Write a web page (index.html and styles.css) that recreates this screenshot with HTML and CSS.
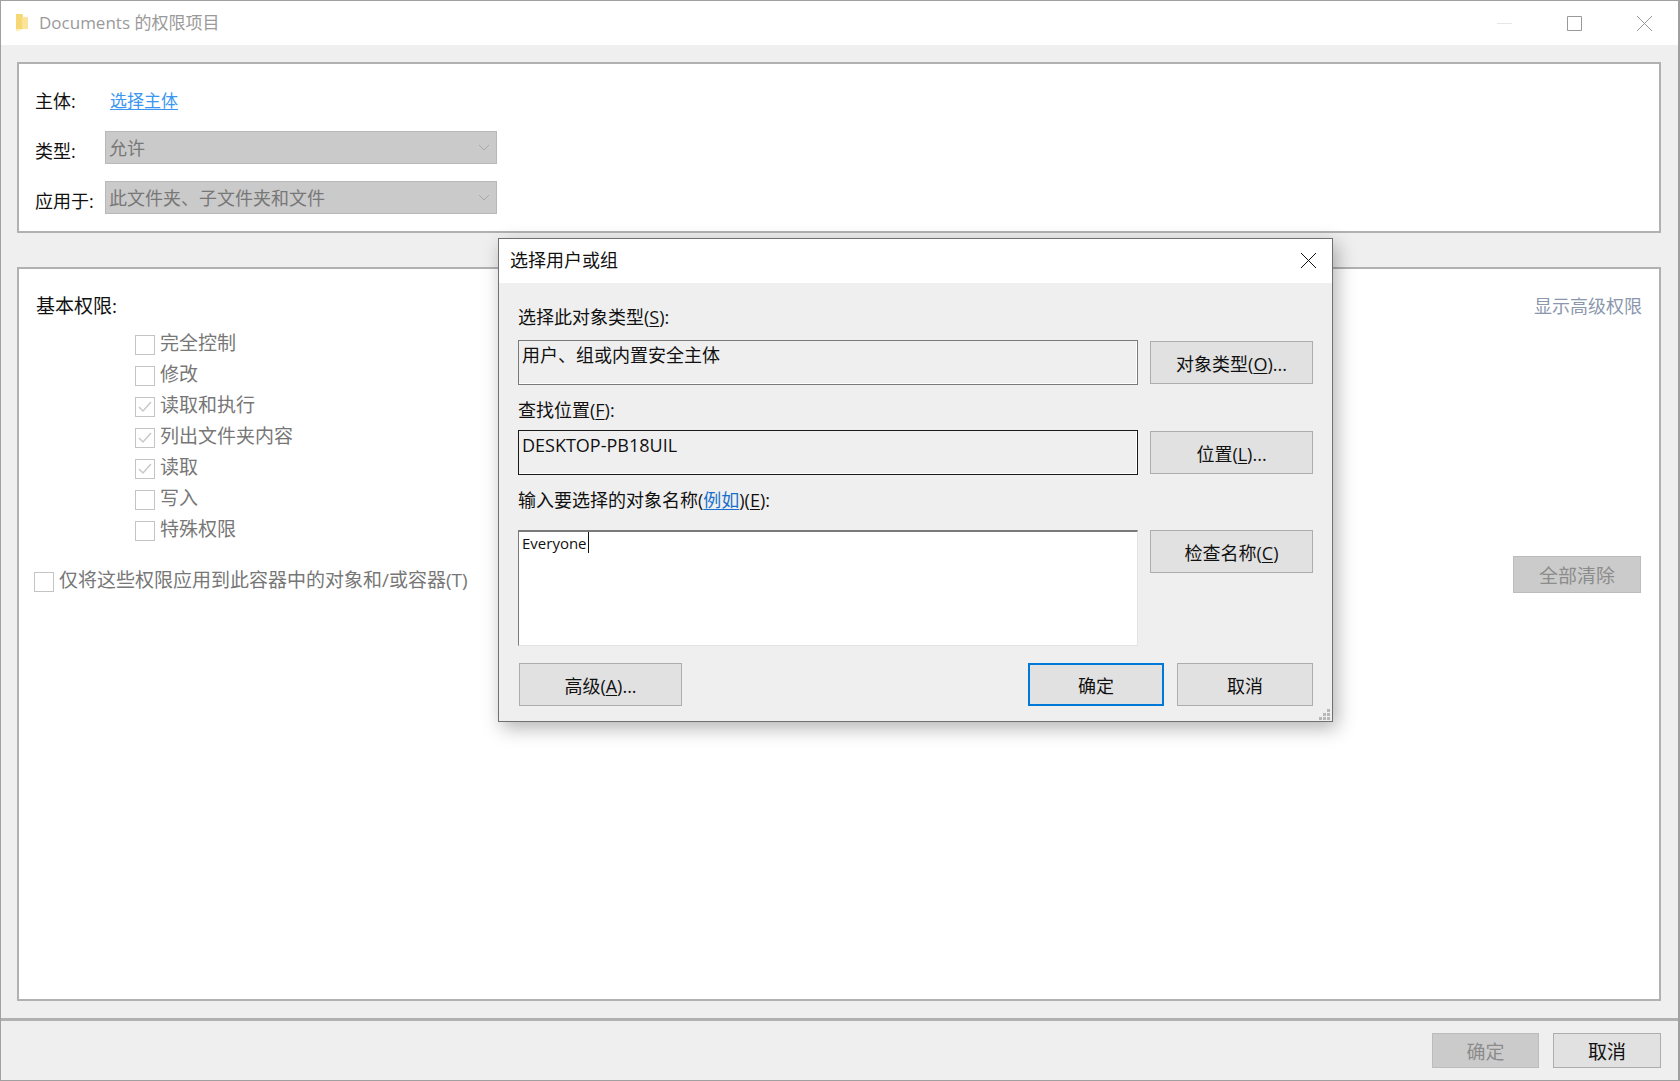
FILE: index.html
```html
<!DOCTYPE html>
<html lang="zh-CN">
<head>
<meta charset="utf-8">
<title>Documents 的权限项目</title>
<link rel="stylesheet" href="styles.css">
</head>
<body>
<div class="window">
  <header class="titlebar">
    <svg class="folder" width="14" height="20" viewBox="0 0 14 20"><path d="M1 1h6l1 1v14l-6 2-1-1z" fill="#f7d774"/><path d="M7 4h6v12H7z" fill="#fbe39a"/><path d="M1 16l1 3 6-3z" fill="#fff1c4"/></svg>
    <span class="window-title">Documents 的权限项目</span>
    <div class="window-controls">
      <svg width="15" height="15" viewBox="0 0 15 15"><path d="M0 7.5h15" stroke="#e6e6e6" fill="none"/></svg>
      <svg width="15" height="15" viewBox="0 0 15 15"><path d="M.5.5h14v14H.5z" stroke="#999" fill="none"/></svg>
      <svg width="15" height="15" viewBox="0 0 15 15"><path d="M0 0l15 15M15 0L0 15" stroke="#999" fill="none"/></svg>
    </div>
  </header>
  <main class="content">
    <section class="panel panel-top">
      <div class="form-grid">
        <span class="form-label form-label-plain">主体:</span>
        <a class="principal-link" href="#">选择主体</a>
        <span class="form-label">类型:</span>
        <div class="select"><span>允许</span><svg width="10" height="6" viewBox="0 0 10 6"><path d="M0 0l5 5 5-5" stroke="#a8a8a8" fill="none"/></svg></div>
        <span class="form-label">应用于:</span>
        <div class="select"><span>此文件夹、子文件夹和文件</span><svg width="10" height="6" viewBox="0 0 10 6"><path d="M0 0l5 5 5-5" stroke="#a8a8a8" fill="none"/></svg></div>
      </div>
    </section>
    <section class="panel panel-main">
      <div class="perm-head">
        <span>基本权限:</span>
        <span class="show-advanced">显示高级权限</span>
      </div>
      <ul class="perm-list">
        <li class="perm"><span class="checkbox"></span><span>完全控制</span></li>
        <li class="perm"><span class="checkbox"></span><span>修改</span></li>
        <li class="perm"><span class="checkbox"><svg width="16" height="16" viewBox="0 0 16 16"><path d="M2 8l4 4 8-9" stroke="#c8c8c8" stroke-width="1.5" fill="none"/></svg></span><span>读取和执行</span></li>
        <li class="perm"><span class="checkbox"><svg width="16" height="16" viewBox="0 0 16 16"><path d="M2 8l4 4 8-9" stroke="#c8c8c8" stroke-width="1.5" fill="none"/></svg></span><span>列出文件夹内容</span></li>
        <li class="perm"><span class="checkbox"><svg width="16" height="16" viewBox="0 0 16 16"><path d="M2 8l4 4 8-9" stroke="#c8c8c8" stroke-width="1.5" fill="none"/></svg></span><span>读取</span></li>
        <li class="perm"><span class="checkbox"></span><span>写入</span></li>
        <li class="perm"><span class="checkbox"></span><span>特殊权限</span></li>
      </ul>
      <div class="perm-foot">
        <div class="perm perm-apply"><span class="checkbox"></span><span>仅将这些权限应用到此容器中的对象和/或容器(T)</span></div>
        <button class="btn-disabled btn-clear" type="button">全部清除</button>
      </div>
    </section>
  </main>
  <footer class="footer">
    <button class="btn-disabled btn-foot" type="button">确定</button>
    <button class="btn btn-foot btn-foot-cancel" type="button">取消</button>
  </footer>
</div>

<div class="dialog">
  <header class="dialog-title">
    <span>选择用户或组</span>
    <svg width="15" height="15" viewBox="0 0 15 15"><path d="M0 0l15 15M15 0L0 15" stroke="#111" fill="none"/></svg>
  </header>
  <div class="dialog-body">
    <div class="dialog-label dl-1">选择此对象类型(<u>S</u>):</div>
    <div class="field field-1">用户、组或内置安全主体</div>
    <button class="btn btn-side" type="button">对象类型(<u>O</u>)...</button>
    <div class="dialog-label dl-2">查找位置(<u>F</u>):</div>
    <div class="field field-2">DESKTOP-PB18UIL</div>
    <button class="btn btn-side" type="button">位置(<u>L</u>)...</button>
    <div class="dialog-label dl-3">输入要选择的对象名称(<a class="sample-link" href="#">例如</a>)(<u>E</u>):</div>
    <div class="names"><span class="names-text">Everyone</span><span class="caret"></span></div>
    <button class="btn btn-side btn-side-top" type="button">检查名称(<u>C</u>)</button>
  </div>
  <div class="dialog-actions">
    <button class="btn btn-advanced" type="button">高级(<u>A</u>)...</button>
    <div class="dialog-actions-right">
      <button class="btn btn-action btn-primary" type="button">确定</button>
      <button class="btn btn-action" type="button">取消</button>
    </div>
  </div>
  <svg class="grip" width="11" height="11" viewBox="0 0 11 11"><path d="M8 0h3v3H8zM4 4h3v3H4zM8 4h3v3H8zM0 8h3v3H0zM4 8h3v3H4zM8 8h3v3H8z" fill="#b8b8b8"/></svg>
</div>
</body>
</html>
```
FILE: styles.css
```css
* { box-sizing: border-box; }
html, body { margin: 0; padding: 0; }
body {
  width: 1680px;
  height: 1081px;
  overflow: hidden;
  position: relative;
  background: #fff;
  font-family: "Open Sans", "Noto Sans CJK SC", sans-serif;
  font-size: 18px;
  color: #111;
}
button { font-family: inherit; font-size: inherit; margin: 0; padding: 0; cursor: default; }
u { text-underline-offset: 2px; text-decoration-thickness: 1px; }

.window {
  width: 1680px;
  height: 1081px;
  border: 1px solid #a0a0a0;
  border-right-width: 2px;
  background: #efefef;
  display: flex;
  flex-direction: column;
}
.titlebar {
  height: 44px;
  flex: none;
  background: #fff;
  display: flex;
  align-items: center;
  padding-left: 14px;
}
.folder { margin-right: 10px; }
.window-title { font-size: 17px; color: #9a9a9a; line-height: 24px; }
.window-controls {
  margin-left: auto;
  display: flex;
  gap: 55px;
  padding-right: 26px;
}

.content {
  flex: 1;
  padding: 17px 17px 17px 16px;
  display: flex;
  flex-direction: column;
  gap: 34px;
}
.panel { background: #fff; border: 2px solid #b1b1b1; }
.panel-top { height: 171px; padding: 20px 0 0 16px; }
.panel-main { height: 734px; padding: 24px 18px 0 15px; flex: none; }

.form-grid {
  display: grid;
  grid-template-columns: 70px 392px;
  grid-template-rows: 34px 33px 33px;
  row-gap: 0;
}
.form-grid > :nth-child(3), .form-grid > :nth-child(4) { margin-top: 13px; }
.form-grid > :nth-child(5), .form-grid > :nth-child(6) { margin-top: 17px; }
.form-grid { grid-template-rows: 34px 46px 50px; }
.form-label { align-self: end; line-height: 26px; margin-bottom: 0; white-space: nowrap; }
.form-label-plain { align-self: center; }
.principal-link {
  align-self: center;
  padding-left: 5px;
  font-size: 17px;
  line-height: 26px;
  color: #3a96f0;
  text-decoration: underline;
  text-decoration-thickness: 1px;
  text-underline-offset: 2px;
}
.select {
  display: flex;
  align-items: center;
  justify-content: space-between;
  background: #cacaca;
  border: 1px solid #b8b8b8;
  padding: 0 7px 0 3px;
  color: #777;
  line-height: 24px;
}

.perm-head {
  display: flex;
  justify-content: space-between;
  font-size: 19px;
  line-height: 26px;
  padding-left: 2px;
}
.show-advanced { font-size: 18px; color: #8b97ac; margin-right: -1px; }
.perm-list {
  list-style: none;
  margin: 16px 0 0;
  padding: 0 0 0 101px;
}
.perm {
  display: flex;
  align-items: flex-start;
  gap: 5px;
  height: 31px;
  font-size: 19px;
  line-height: 20px;
  color: #777;
  white-space: nowrap;
}
.perm > span:last-child { margin-top: -2px; }
.checkbox {
  width: 20px;
  height: 20px;
  flex: none;
  background: #fff;
  border: 1px solid #c4c4c4;
  display: flex;
  align-items: center;
  justify-content: center;
}
.perm-foot {
  margin-top: 4px;
  height: 37px;
  display: flex;
  justify-content: space-between;
  align-items: flex-end;
}
.perm-apply { height: 21px; }
.btn-disabled {
  background: #cbcbcb;
  border: 1px solid #bcbcbc;
  color: #8c8c8c;
  font-size: 19px;
}
.btn-clear { width: 128px; height: 37px; }

.footer {
  flex: 1;
  border-top: 3px solid #b1b1b1;
  display: flex;
  justify-content: flex-end;
  gap: 14px;
  padding: 12px 17px 0 0;
}
.btn-foot { height: 35px; width: 107px; font-size: 19px; }
.btn-foot-cancel { width: 108px; color: #000; }

.btn {
  background: #e1e1e1;
  border: 1px solid #adadad;
  color: #111;
}

.dialog {
  position: absolute;
  left: 498px;
  top: 238px;
  width: 835px;
  height: 484px;
  background: #efefef;
  border: 1px solid #707070;
  box-shadow: 4px 6px 18px rgba(0, 0, 0, 0.3);
}
.dialog-title {
  height: 44px;
  background: #fff;
  display: flex;
  align-items: center;
  justify-content: space-between;
  padding: 0 16px 2px 11px;
  line-height: 26px;
}
.dialog-body {
  display: grid;
  grid-template-columns: 620px 163px;
  column-gap: 12px;
  padding: 21px 0 0 19px;
}
.dialog-label { grid-column: 1 / -1; line-height: 26px; white-space: nowrap; }
.dl-1 { margin-bottom: 10px; }
.dl-2 { margin-top: 12px; margin-bottom: 7px; }
.dl-3 { margin-top: 12px; margin-bottom: 17px; }
.field {
  height: 45px;
  padding: 1px 3px;
  line-height: 26px;
  border: 1px solid #7a7a7a;
  box-shadow: inset -1px -1px 0 #fff;
}
.field-2 { border-color: #1a1a1a; }
.btn-side { height: 43px; align-self: center; }
.btn-side-top { align-self: start; }
.names {
  height: 116px;
  background: #fff;
  border-style: solid;
  border-color: #7a7a7a #e3e3e3 #e3e3e3 #7a7a7a;
  border-width: 2px 1px 1px 1px;
  padding: 0 3px;
  display: flex;
  align-items: flex-start;
}
.names-text { font-size: 15px; line-height: 22px; }
.caret { width: 1px; height: 21px; background: #111; margin-left: 1px; }
.sample-link { color: #1a6fcc; text-decoration: underline; text-decoration-thickness: 1px; text-underline-offset: 2px; }

.dialog-actions {
  display: flex;
  justify-content: space-between;
  padding: 17px 19px 0 20px;
}
.dialog-actions-right { display: flex; gap: 13px; }
.btn-advanced { width: 163px; height: 43px; }
.btn-action { width: 136px; height: 43px; }
.btn-primary { border: 2px solid #0078d7; }
.grip { position: absolute; right: 2px; bottom: 1px; }
```
